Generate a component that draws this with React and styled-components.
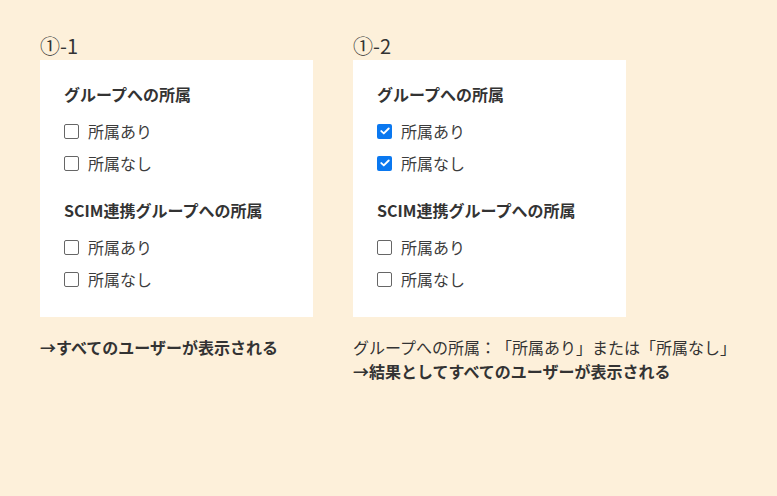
import React from 'react'
import styled, {createGlobalStyle} from 'styled-components'

const GlobalStyle = createGlobalStyle`
    body {
        margin: 0;
        background: #fdf0da;
        font-family: "Noto Sans CJK JP", "Noto Sans", sans-serif;
        color: #333333;
        text-spacing-trim: space-all;
    }
`

const Page = styled.div`
    display: flex;
    gap: 40px;
    padding: 33px 40px 0;
    min-height: 496px;
    box-sizing: border-box;
`

const Column = styled.div`
    display: flex;
    flex-direction: column;
`

const Label = styled.div`
    font-size: 20px;
    line-height: 26px;
    height: 27px;
    color: #333;
`

const Panel = styled.div`
    width: 273px;
    box-sizing: border-box;
    background: #ffffff;
    padding: 23px 24px 22px;
`

const Title = styled.div`
    font-size: 16px;
    font-weight: bold;
    line-height: 22px;
    margin-top: ${({first}) => (first ? "0" : "20px")};
    margin-bottom: 10px;
`

const Option = styled.label`
    display: flex;
    align-items: center;
    gap: 9px;
    height: 32px;
    font-size: 16px;
    color: #3c3c3c;
`

const Box = styled.span`
    width: 15px;
    height: 15px;
    box-sizing: border-box;
    border-radius: 2px;
    border: ${({checked}) => (checked ? "none" : "1px solid #666")};
    background: ${({checked}) => (checked ? "#0a78f0" : "#fff")};
    display: flex;
    align-items: center;
    justify-content: center;
`

const Note = styled.div`
    margin-top: 18px;
    font-size: 16px;
    line-height: 24px;
    white-space: nowrap;
`

const Bold = styled.div`
    font-weight: bold;
`

function Check({checked, children}) {
    return (
        <Option>
            <Box checked={checked}>
                {checked && (
                    <svg width="10" height="8" viewBox="0 0 10 8">
                        <path d="M1.3 4.1 L3.8 6.4 L8.7 1.5" fill="none" stroke="#fff" strokeWidth="1.9" strokeLinecap="round" strokeLinejoin="round"/>
                    </svg>
                )}
            </Box>
            {children}
        </Option>
    )
}

function Card({checked}) {
    return (
        <Panel>
            <Title first>グループへの所属</Title>
            <Check checked={checked}>所属あり</Check>
            <Check checked={checked}>所属なし</Check>
            <Title>SCIM連携グループへの所属</Title>
            <Check>所属あり</Check>
            <Check>所属なし</Check>
        </Panel>
    )
}

export default function App() {
    return (
        <>
            <GlobalStyle/>
            <Page>
                <Column>
                    <Label>①-1</Label>
                    <Card/>
                    <Note>
                        <Bold>→すべてのユーザーが表示される</Bold>
                    </Note>
                </Column>
                <Column>
                    <Label>①-2</Label>
                    <Card checked/>
                    <Note>
                        <div>グループへの所属：「所属あり」または「所属なし」</div>
                        <Bold>→結果としてすべてのユーザーが表示される</Bold>
                    </Note>
                </Column>
            </Page>
        </>
    )
}
